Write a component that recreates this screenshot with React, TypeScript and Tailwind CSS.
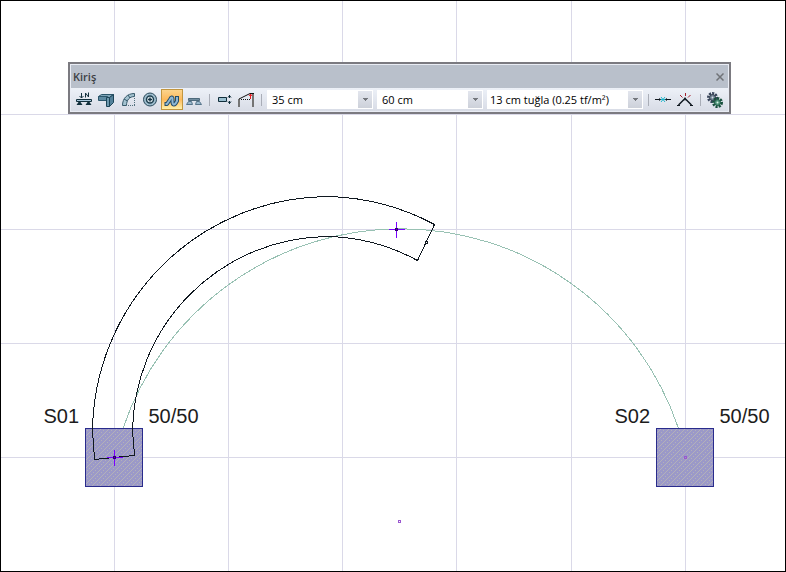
import type { ReactNode } from "react";

const GRID_X = [114, 228, 342, 456, 571, 685];
const GRID_Y = [114, 229, 343, 457];

const GUIDE_ARC = "M122.500 428A293 293 0 0 1 678 428";

const BEAM_OUTLINE =
  "M94 459L92 430A237 237 0 0 1 327 196A237 237 0 0 1 434 224L417 260A197 197 0 0 0 327 236A197 197 0 0 0 132 430L134 455Z";

function Column({ x, name, size }: { x: number; name: string; size: string }) {
  return (
    <g>
      <rect x={x} y={428} width={57} height={58} fill="url(#hatch)" stroke="#292b8c" />
      <text x={x - 42} y={422} className="text-[20px]" fill="#1c1c1c">{name}</text>
      <text x={x + 63} y={422} className="text-[20px]" fill="#1c1c1c">{size}</text>
    </g>
  );
}

function Cross({ x, y }: { x: number; y: number }) {
  return (
    <g stroke="#7a00ff">
      <path d={`M${x - 8} ${y}h16M${x} ${y - 8}v16`} />
      <rect x={x - 1} y={y - 1} width={2} height={2} fill="#5a00c0" stroke="#30006c" />
    </g>
  );
}

function Drawing() {
  return (
    <svg
      className="absolute inset-0 h-full w-full font-['Liberation_Sans',Arial,sans-serif]"
      role="img"
      aria-label="Plan"
    >
      <defs>
        <pattern id="hatch" width="8" height="8" patternUnits="userSpaceOnUse" patternTransform="translate(.5 .5)">
          <rect width="8" height="8" fill="#9b99c8" />
          <path
            d="M0 7h1v1h-1zM1 6h1v1h-1zM2 5h1v1h-1zM3 4h1v1h-1zM4 3h1v1h-1zM5 2h1v1h-1zM6 1h1v1h-1zM7 0h1v1h-1z"
            fill="#b3b1b9"
          />
          <path d="M2 1h1v1h-1zM0 3h1v1h-1zM6 5h1v1h-1zM4 7h1v1h-1z" fill="#b3b1b9" />
        </pattern>
      </defs>
      <g transform="translate(.5 .5)" fill="none" shapeRendering="crispEdges">
        {GRID_X.map((x) => (
          <line key={x} x1={x} x2={x} y1="0" y2="100%" stroke="#dad9e8" />
        ))}
        {GRID_Y.map((y) => (
          <line key={y} x1="0" x2="100%" y1={y} y2={y} stroke="#dad9e8" />
        ))}
        <path d={GUIDE_ARC} stroke="#98c1b3" />
        <Column x={85} name="S01" size="50/50" />
        <Column x={656} name="S02" size="50/50" />
        <path d={BEAM_OUTLINE} stroke="#101820" />
        <rect x={425} y={241} width={2} height={2} fill="#fff" stroke="#101820" />
        <Cross x={114} y={457} />
        <Cross x={396} y={229} />
        <rect x={684} y={456} width={2} height={2} stroke="#9b58d0" />
        <rect x={398} y={520} width={2} height={2} stroke="#9b58d0" />
      </g>
    </svg>
  );
}

function Icon({ children }: { children: ReactNode }) {
  return (
    <svg width="16" height="16" viewBox="0 0 16 16" fill="none" aria-hidden="true">
      {children}
    </svg>
  );
}

const LoadedBeamIcon = (
  <Icon>
    <path d="M5.500 1v5M3.500 4l2 2 2-2" stroke="#12303d" />
    <path d="M9.500 5.500V1l3 4V.5" stroke="#12303d" />
    <path d="M.5 7.500h15v2H.5z" fill="#a9c8dc" stroke="#12303d" />
    <path d="M2.500 10h2l2 3h-6zM11.500 10h2l2 3h-6z" fill="#12303d" />
  </Icon>
);

const BeamIcon = (
  <Icon>
    <path d="M.5 4.500l3-2h12l-4 3z" fill="#7ea5b9" stroke="#2b566b" />
    <path d="M.5 4.500h9v4h-9z" fill="#5d8aa2" stroke="#2b566b" />
    <path d="M11.500 5.500l4-3v8l-4 4z" fill="#53819a" stroke="#1c4558" />
    <path d="M8.500 5.500h3v9h-3z" fill="#6d98ae" stroke="#1c4558" />
  </Icon>
);

const ArcBeamIcon = (
  <Icon>
    <path d="M2.500 13.500C2.500 6.500 7 1.500 14.500 1.500v3C9.500 4.500 6.500 8 6.500 13.500z" fill="#a3c2d0" stroke="#36596a" />
    <path d="M4 7l3.500 2M8 3l2 3" stroke="#36596a" />
    <path d="M8 13.500h7M14.500 6v7" stroke="#52707d" strokeDasharray="1 1" />
  </Icon>
);

const RingIcon = (
  <Icon>
    <circle cx="8" cy="7.500" r="6.500" fill="#9dbccd" stroke="#29495a" />
    <circle cx="8" cy="7.500" r="3.500" fill="#e8f2f7" stroke="#1f4050" strokeWidth="1.500" />
    <path d="M8 5.500v4M6 7.500h4" stroke="#153444" strokeWidth="1.500" />
  </Icon>
);

const SplineIcon = (
  <Icon>
    <path d="M.5 12H3l3-4.500C7 5 8.500 5 8.500 7v3c0 3 1.500 3 3 1.500l1.500-2.500V4" stroke="#254d69" strokeWidth="4" strokeLinejoin="round" />
    <path d="M1.500 12H3l3-4.500C7 5 8.500 5 8.500 7v3c0 3 1.500 3 3 1.500l1.500-2.500V5" stroke="#8fb8d4" strokeWidth="2" strokeLinejoin="round" />
  </Icon>
);

const FoundationIcon = (
  <Icon>
    <path d="M2.500 6.500h11v2h-11z" fill="#6f8c9f" stroke="#4d697b" />
    <path d="M2.500 9.500h3l1 3h-6zM10.500 9.500h3l2 3h-6z" fill="#9ab8cc" stroke="#56748a" />
  </Icon>
);

const OffsetIcon = (
  <Icon>
    <path d="M2.500 5.500h8v4h-8z" fill="#9abfd0" stroke="#102d3a" />
    <path d="M13.500 3v3M12 5.500l1.500-2 1.500 2M13.500 9v3M12 9.500l1.500 2 1.500-2" stroke="#102d3a" />
  </Icon>
);

const SlopeIcon = (
  <Icon>
    <path d="M1 15V7M15 15V1" stroke="#747474" strokeWidth="2" />
    <path d="M1 7l11-5.500h4" stroke="#111" />
    <path d="M3 7.500h9" stroke="#111" strokeDasharray="1 1" />
    <path d="M12.500 2v5M11 4l1.500-2L14 4" stroke="#e81c22" />
  </Icon>
);

const JoinIcon = (
  <Icon>
    <path d="M6 5l4 5M10 5l-4 5M5 7.500h6" stroke="#20b6cc" />
    <path d="M0 7.500h5M11 7.500h5" stroke="#101820" />
    <path d="M4 6l2 1.500L4 9zM12 6l-2 1.500L12 9z" fill="#101820" />
  </Icon>
);

const TrimIcon = (
  <Icon>
    <path d="M1.500 13L8 6.500l6.500 6.500" stroke="#101820" strokeWidth="1.500" />
    <path d="M0 13.500h3M13 13.500h3" stroke="#101820" />
    <path d="M8 5.500v3" stroke="#101820" />
    <path d="M8.500 1v3M3 3l2.500 2.500M13.500 3L11 5.500" stroke="#a51f2c" />
  </Icon>
);

const SettingsIcon = (
  <Icon>
    <circle cx="5.500" cy="5.500" r="4" stroke="#36435a" strokeWidth="3" strokeDasharray="2 1" />
    <circle cx="5.500" cy="5.500" r="3" fill="#6f8194" stroke="#34404e" />
    <circle cx="5.500" cy="5.500" r="1" fill="#d5dce4" />
    <circle cx="10.500" cy="10.500" r="4" stroke="#174f3c" strokeWidth="3" strokeDasharray="2 1" />
    <circle cx="10.500" cy="10.500" r="3" fill="#4f947a" stroke="#205a45" />
    <circle cx="10.500" cy="10.500" r="1" fill="#d7f1e5" />
  </Icon>
);

function Tool({ label, active, children }: { label: string; active?: boolean; children: ReactNode }) {
  return (
    <button
      type="button"
      aria-label={label}
      aria-pressed={active}
      className={
        active
          ? "flex h-[21px] w-[22px] shrink-0 items-center justify-center border border-[#c2963f] bg-linear-to-b from-[#fbd48c] via-[#fdb95a] to-[#fff0a8]"
          : "flex h-[21px] w-[22px] shrink-0 items-center justify-center hover:bg-[#ffe8a6]"
      }
    >
      {children}
    </button>
  );
}

function Separator() {
  return (
    <div className="flex w-2 shrink-0 justify-center">
      <div className="h-3 w-px bg-[#a9adb7]" />
    </div>
  );
}

function Combo({ label, value, wide }: { label: string; value: string; wide?: boolean }) {
  return (
    <div className={wide ? "relative h-[19px] w-[156px] shrink-0" : "relative h-[19px] w-[106px] shrink-0"}>
      <select
        aria-label={label}
        className={
          wide
            ? "block h-full w-full appearance-none bg-white pl-[3px] text-[11px] leading-[19px] text-black"
            : "block h-full w-full appearance-none bg-white pl-[5px] text-[11px] leading-[19px] text-black"
        }
      >
        <option>{value}</option>
      </select>
      <span className="pointer-events-none absolute inset-y-px right-px flex w-[14px] items-center justify-center bg-linear-to-b from-[#e3e6ee] to-[#cdd1da]">
        <svg width="5" height="3" viewBox="0 0 5 3" shapeRendering="crispEdges" aria-hidden="true">
          <path d="M0 0h5v1H4v1H3v1H2V2H1V1H0z" fill="#74777d" />
        </svg>
      </span>
    </div>
  );
}

function Toolbar() {
  return (
    <section
      aria-labelledby="toolbar-title"
      className="absolute top-[62px] left-[68px] w-max border-2 border-[#7b7a80] bg-[#e9ecf4] p-px font-['Open_Sans','Noto_Sans',sans-serif]"
    >
      <header className="flex h-[23px] items-center justify-between bg-[#b9c0cb] px-[2px]">
        <h1 id="toolbar-title" className="text-[11px] leading-4 font-semibold text-[#3c3e43]">Kiriş</h1>
        <button type="button" aria-label="Kapat" className="flex size-3 items-center justify-center">
          <svg width="8" height="8" viewBox="0 0 8 8" aria-hidden="true">
            <path d="M.5.5l7 7M7.500.5l-7 7" stroke="#707378" strokeWidth="1.500" />
          </svg>
        </button>
      </header>
      <div className="flex h-[23px] items-center bg-linear-to-b from-[#edf1f8] to-[#d8dce6] px-[2px]">
        <Tool label="Kiriş yükü">{LoadedBeamIcon}</Tool>
        <Tool label="Doğrusal kiriş">{BeamIcon}</Tool>
        <Tool label="Yay kiriş">{ArcBeamIcon}</Tool>
        <Tool label="Dairesel kiriş">{RingIcon}</Tool>
        <Tool label="Eğri kiriş" active>{SplineIcon}</Tool>
        <Tool label="Temel kirişi">{FoundationIcon}</Tool>
        <Separator />
        <Tool label="Kaçıklık">{OffsetIcon}</Tool>
        <Tool label="Eğim">{SlopeIcon}</Tool>
        <Separator />
        <div className="flex gap-1 pr-px pl-[2px]">
          <Combo label="Genişlik" value="35 cm" />
          <Combo label="Yükseklik" value="60 cm" />
          <Combo label="Duvar" value="13 cm tuğla (0.25 tf/m²)" wide />
        </div>
        <Separator />
        <Tool label="Birleştir">{JoinIcon}</Tool>
        <Tool label="Buda">{TrimIcon}</Tool>
        <Separator />
        <Tool label="Ayarlar">{SettingsIcon}</Tool>
      </div>
    </section>
  );
}

export default function App() {
  return (
    <main className="relative h-screen w-full overflow-hidden bg-white">
      <Drawing />
      <Toolbar />
      <div className="pointer-events-none absolute inset-0 border border-black" />
    </main>
  );
}
